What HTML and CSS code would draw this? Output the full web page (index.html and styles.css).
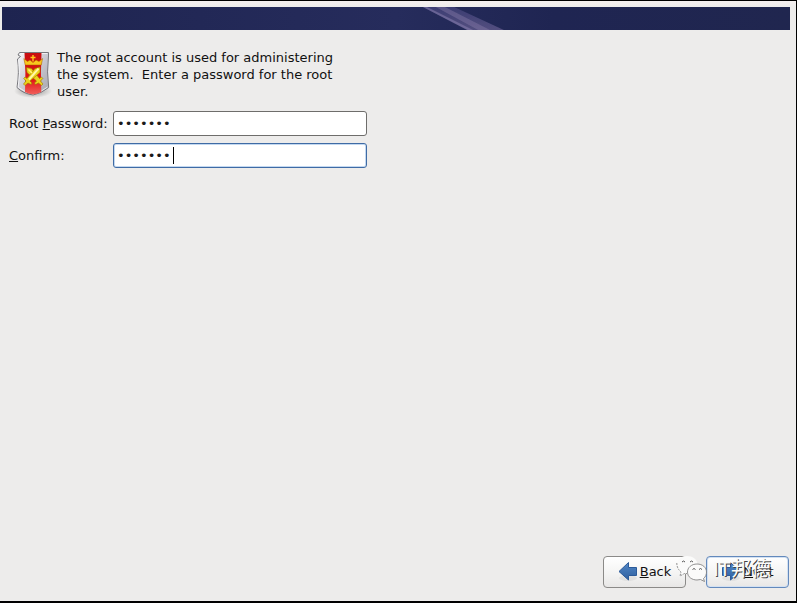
FILE: index.html
```
<!DOCTYPE html>
<html lang="en">
<head>
  <meta charset="UTF-8">
  <meta name="viewport" content="width=device-width, initial-scale=1.0">
  <title>Root Password</title>
  <link rel="stylesheet" href="styles.css">
</head>
<body>

  <div class="installer">
    <header class="banner">
      <svg class="banner-art" viewBox="0 0 788 23" preserveAspectRatio="xMidYMid slice" aria-hidden="true">
        <defs>
          <linearGradient id="streak" x1="0" y1="0" x2="0" y2="1">
            <stop offset="0" stop-color="#4a4983"/>
            <stop offset="1" stop-color="#75699b"/>
          </linearGradient>
          <filter id="soft"><feGaussianBlur stdDeviation=".7"/></filter>
        </defs>
        <g filter="url(#soft)">
          <path d="M419 -1H450L504 24H468Z" fill="url(#streak)" opacity=".6"/>
          <path d="M419 -1H423L473 24H467Z" fill="#8279aa" opacity=".6"/>
          <path d="M432 -1H441L490 24H478Z" fill="#8b80ad" opacity=".4"/>
        </g>
      </svg>
    </header>

    <form class="page">
      <div class="intro">
        <svg class="shield" viewBox="0 0 40 50" aria-hidden="true">
          <defs>
            <linearGradient id="steel" x1="0" y1="0" x2="1" y2="1">
              <stop offset="0" stop-color="#f8f8f9"/>
              <stop offset=".5" stop-color="#c9c9d1"/>
              <stop offset="1" stop-color="#a5a5ac"/>
            </linearGradient>
            <linearGradient id="red" x1="0" y1="0" x2="0" y2="1">
              <stop offset="0" stop-color="#c80d10"/>
              <stop offset=".65" stop-color="#e31616"/>
              <stop offset="1" stop-color="#f0605c"/>
            </linearGradient>
            <radialGradient id="shade">
              <stop offset="0" stop-color="#000" stop-opacity=".4"/>
              <stop offset="1" stop-color="#000" stop-opacity="0"/>
            </radialGradient>
          </defs>
          <ellipse cx="20" cy="42" rx="19" ry="7" fill="url(#shade)"/>
          <path d="M6.500 3.500H35.500V7Q33.500 23 35.700 38.500Q28 44.500 20 46Q10 44.500 4 38.500Q6.500 23 4.500 10L7.500 7.500L5 6Z" fill="url(#steel)" stroke="#77777c"/>
          <path d="M8 4.500H34.500M5.500 11Q7.500 24 5.200 38.200Q12 43.500 20 44.900Q28 43.500 34.600 38" fill="none" stroke="#fff" stroke-opacity=".7"/>
          <path d="M11.500 4H28.500Q27.500 24 28.300 43Q24 45 20 45.500Q16 45 12 43Q13 24 11.500 4Z" fill="url(#red)"/>
          <path d="M10.800 9.500L14.500 12.500L17 11L20 13.500L23 11L26 12.500L29.600 9.500L28.300 16H12.200Z" fill="#f8c81e" stroke="#a85a00" stroke-width=".5"/>
          <path d="M20 6V12.500M17.500 8.500H22.500" stroke="#ffc91c" stroke-width="1.400"/>
          <g fill="#ecd21c" stroke="#9a7400" stroke-width=".6" stroke-linejoin="round">
            <path d="M13.500 18.500L18.500 19.500L26.500 29.500L28.500 28L29.800 29.500L27.500 32L30 35L28.500 36.500L25.500 34L22.500 35.500L21.500 34L23.500 32L14 23.500Z"/>
            <path d="M27 18L22 19.500L14 29.500L12 28L10.700 29.500L13 32L10.500 35L12 36.500L15 34L18 35.500L19 34L17 32L27 23.500Z"/>
          </g>
          <path d="M25.500 19.700L16 30.500" stroke="#fff9a8" stroke-width="2"/>
          <path d="M15.500 20.500L19 24" stroke="#fff27a" stroke-width="1.500"/>
        </svg>
        <p class="intro-text">The root account is used for administering the system.&nbsp; Enter a password for the root user.</p>
      </div>

      <div class="fields">
        <label for="password">Root <u>P</u>assword:</label>
        <input class="entry" id="password" type="password" value="1234567">
        <label for="confirm"><u>C</u>onfirm:</label>
        <div class="entry-wrap">
          <input class="entry entry-active" id="confirm" type="password" value="1234567">
          <span class="caret"></span>
        </div>
      </div>

      <div class="actions">
        <button class="nav-button" type="button">
          <svg class="arrow" viewBox="0 0 20 20" aria-hidden="true">
            <defs>
              <linearGradient id="blue" x1="0" y1="0" x2="0" y2="1">
                <stop offset="0" stop-color="#5187c6"/>
                <stop offset="1" stop-color="#2e5f9f"/>
              </linearGradient>
            </defs>
            <ellipse cx="10" cy="17" rx="9" ry="3" fill="#000" opacity=".06"/>
            <path d="M10.500 1.500V6.500H18.500V14.500H10.500V19L1 10.500Z" fill="url(#blue)" stroke="#2b5a99" stroke-linejoin="round"/>
          </svg>
          <span><u>B</u>ack</span>
        </button>
        <button class="nav-button nav-default" type="button">
          <svg class="arrow" viewBox="0 0 20 20" aria-hidden="true">
            <ellipse cx="10" cy="17" rx="9" ry="3" fill="#000" opacity=".06"/>
            <path d="M9.500 1.500V6.500H1.500V14.500H9.500V19L19 10.500Z" fill="url(#blue)" stroke="#2b5a99" stroke-linejoin="round"/>
          </svg>
          <span><u>N</u>ext</span>
        </button>

        <!-- Channel mark over the buttons -->
        <div class="watermark">
          <svg class="bubbles" viewBox="0 0 32 28" aria-hidden="true">
            <g fill="#fbfbfa" stroke="#777" stroke-width=".8">
              <path d="M11 1C5 1 .8 4.800 .8 9.800C.8 13 2.500 15.500 5 17L4 21L8.500 18.500Q13 19.300 15.500 17.500C20 16 22 13 21.500 9C21 4 16.500 1 11 1Z" stroke="none"/>
              <path d="M.8 8Q.8 13.500 5 17L4 21L8.500 18.500H11" fill="none" stroke-dasharray="2 1"/>
              <path d="M21 9C15.500 9 11.500 12.500 11.500 17C11.500 22 16 25 21 25L24.500 24.500L28.500 26.500L27.500 23.500C29.500 22 30.500 19.500 30.500 17C30.500 12.500 26.500 9 21 9Z"/>
            </g>
            <path d="M6 7Q7.500 5 9 7M14 7Q15.500 5 17 7M16.500 14.500Q18 12.500 19.500 14.500M23 14.500Q24.500 12.500 26 14.500" fill="none" stroke="#555"/>
          </svg>
          <span class="watermark-text">IT邦德</span>
        </div>
      </div>
    </form>
  </div>

</body>
</html>
```
FILE: styles.css
```
/* Base styling */
* {
  margin: 0;
  padding: 0;
  box-sizing: border-box;
}

body {
  background-color: #edeceb;
  color: #111;
  font-family: "DejaVu Sans", sans-serif;
  font-size: 13px;
  line-height: 17px;
}

/* Installer window */
.installer {
  display: flex;
  flex-direction: column;
  min-height: 100vh;
  border: solid #000;
  border-width: 1px 1px 2px 0;
  background: linear-gradient(#f5f0f0, #edeceb 6px);
}

.banner {
  height: 23px;
  margin: 6px 6px 0 2px;
  background: linear-gradient(to right, #1e2450, #262c5c 50%, #1f2552 70%, #20264f);
}

.banner-art {
  display: block;
  width: 100%;
  height: 100%;
}

.page {
  display: flex;
  flex: 1;
  flex-direction: column;
  padding: 19px 7px 13px 9px;
}

/* Introduction */
.intro {
  display: flex;
  gap: 4px;
  padding-left: 4px;
}

.shield {
  flex: none;
  width: 40px;
  height: 50px;
}

.intro-text {
  max-width: 290px;
}

/* Password fields */
.fields {
  display: grid;
  grid-template-columns: 98px minmax(0, 254px);
  align-items: center;
  gap: 7px 6px;
  margin-top: 11px;
  white-space: nowrap;
}

.entry {
  display: block;
  width: 100%;
  height: 25px;
  padding: 0 3px;
  border: 1px solid #6e6d6b;
  border-radius: 3px;
  outline: none;
  background: #fff;
  color: #1a1a1a;
  font-family: "DejaVu Sans", sans-serif;
  font-size: 13px;
}

.entry-active,
.entry:focus {
  border-color: #3f6ba5;
  box-shadow: inset 0 0 0 1px #c3d8f0;
}

.entry-wrap {
  position: relative;
}

.caret {
  position: absolute;
  top: 4px;
  left: 60px;
  width: 1px;
  height: 17px;
  background: #000;
}

/* Back and Next */
.actions {
  position: relative;
  display: flex;
  justify-content: flex-end;
  gap: 20px;
  margin-top: auto;
}

.nav-button {
  display: flex;
  align-items: center;
  justify-content: center;
  gap: 2px;
  width: 83px;
  height: 32px;
  padding-bottom: 2px;
  border: 1px solid #8b8a88;
  border-radius: 4px;
  background: linear-gradient(#fff, #f4f4f3 55%, #e8e7e6);
  color: #111;
  font: inherit;
}

.nav-default {
  border-color: #6389bc;
  box-shadow: inset 0 0 0 1px #d3e1f2;
}

.arrow {
  width: 20px;
  height: 20px;
}

.watermark {
  position: absolute;
  right: 18px;
  bottom: 5px;
  display: flex;
  align-items: center;
  gap: 5px;
  pointer-events: none;
}

.bubbles {
  width: 32px;
  height: 28px;
}

.watermark-text {
  color: #fafafa;
  font-family: "Liberation Sans", "Noto Sans CJK SC", sans-serif;
  font-size: 20px;
  line-height: 28px;
  text-shadow: 1px 1px 0 #444;
}
```
